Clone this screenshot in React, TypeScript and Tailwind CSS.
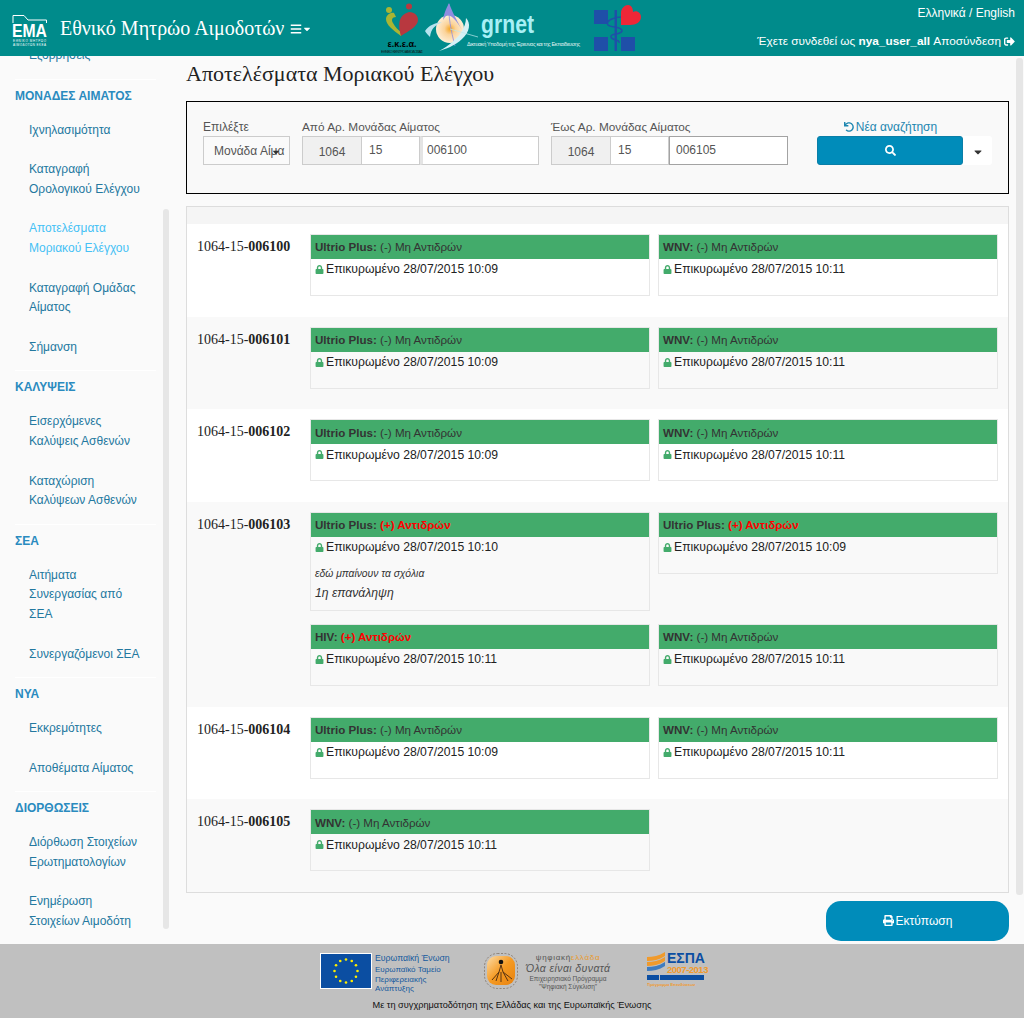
import { FaBars, FaCaretDown, FaLock, FaPrint, FaSearch, FaSignOutAlt, FaUndo } from 'react-icons/fa';

interface NavGroup {
  title?: string;
  items: string[];
}

interface CardData {
  name: string;
  positive?: boolean;
  date: string;
  comments?: boolean;
}

interface RowData {
  code: string;
  cards: CardData[];
}

const navGroups: NavGroup[] = [
  { items: ['Εξορρήσεις'] },
  {
    title: 'ΜΟΝΑΔΕΣ ΑΙΜΑΤΟΣ',
    items: ['Ιχνηλασιμότητα', 'Καταγραφή\nΟρολογικού Ελέγχου', 'Αποτελέσματα\nΜοριακού Ελέγχου', 'Καταγραφή Ομάδας\nΑίματος', 'Σήμανση'],
  },
  { title: 'ΚΑΛΥΨΕΙΣ', items: ['Εισερχόμενες\nΚαλύψεις Ασθενών', 'Καταχώριση\nΚαλύψεων Ασθενών'] },
  { title: 'ΣΕΑ', items: ['Αιτήματα\nΣυνεργασίας από\nΣΕΑ', 'Συνεργαζόμενοι ΣΕΑ'] },
  { title: 'ΝΥΑ', items: ['Εκκρεμότητες', 'Αποθέματα Αίματος'] },
  { title: 'ΔΙΟΡΘΩΣΕΙΣ', items: ['Διόρθωση Στοιχείων\nΕρωτηματολογίων', 'Ενημέρωση\nΣτοιχείων Αιμοδότη'] },
];

const rows: RowData[] = [
  { code: '006100', cards: [{ name: 'Ultrio Plus', date: '28/07/2015 10:09' }, { name: 'WNV', date: '28/07/2015 10:11' }] },
  { code: '006101', cards: [{ name: 'Ultrio Plus', date: '28/07/2015 10:09' }, { name: 'WNV', date: '28/07/2015 10:11' }] },
  { code: '006102', cards: [{ name: 'Ultrio Plus', date: '28/07/2015 10:09' }, { name: 'WNV', date: '28/07/2015 10:11' }] },
  {
    code: '006103',
    cards: [
      { name: 'Ultrio Plus', positive: true, date: '28/07/2015 10:10', comments: true },
      { name: 'Ultrio Plus', positive: true, date: '28/07/2015 10:09' },
      { name: 'HIV', positive: true, date: '28/07/2015 10:11' },
      { name: 'WNV', date: '28/07/2015 10:11' },
    ],
  },
  { code: '006104', cards: [{ name: 'Ultrio Plus', date: '28/07/2015 10:09' }, { name: 'WNV', date: '28/07/2015 10:11' }] },
  { code: '006105', cards: [{ name: 'WNV', date: '28/07/2015 10:11' }] },
];

function EmaLogo() {
  return (
    <svg width="36" height="36" viewBox="0 0 36 36" className="shrink-0">
      <path d="M1 9V1.5H12L16 6H34.5V9" fill="none" stroke="#fff" strokeWidth="1" />
      <text x="0" y="23" fill="#fff" fontSize="19" fontWeight="700" textLength="35" lengthAdjust="spacingAndGlyphs">EMA</text>
      <text x="1" y="28" fill="#fff" fontSize="3" textLength="33">ΕΘΝΙΚΟ ΜΗΤΡΩΟ</text>
      <text x="1" y="32" fill="#fff" fontSize="3" textLength="33">ΑΙΜΟΔΟΤΩΝ ΕΚΕΑ</text>
    </svg>
  );
}

function EkeaLogo() {
  return (
    <svg width="44" height="50" viewBox="0 0 44 50" className="shrink-0">
      <circle cx="8" cy="7" r="3" fill="#a9b533" />
      <circle cx="28" cy="3.5" r="3" fill="#b8383f" />
      <path d="M20 33C12 27 5 22 5 16C5 12 10 9 13 10L15 14C11 14 10 17 12 20C14 24 17 27 20 29Z" fill="#a9b533" />
      <path d="M20 33C17 22 17 12 28 9C34 9 37 13 37 17C37 23 28 28 20 33Z" fill="#b8383f" />
      <text x="21" y="44" textAnchor="middle" fill="#000" fontSize="9" fontWeight="700">ε.κ.ε.α.</text>
      <text x="21" y="49.5" textAnchor="middle" fill="#111" fontSize="3.6" textLength="42">ΕΘΝΙΚΟ ΚΕΝΤΡΟ ΑΙΜΟΔΟΣΙΑΣ</text>
    </svg>
  );
}

function GrnetLogo() {
  return (
    <svg width="158" height="50" viewBox="0 0 158 50" className="shrink-0">
      <defs>
        <radialGradient id="orb">
          <stop offset="0" stopColor="#f5a623" />
          <stop offset="0.4" stopColor="#fbd39a" />
          <stop offset="1" stopColor="#fdeed6" />
        </radialGradient>
      </defs>
      <circle cx="25" cy="26" r="14" fill="url(#orb)" />
      <path d="M18 17C19 10 21 6 24 0C27 8 30 14 37 27C31 17 26 11 21 13C20 14 19 15 18 17Z" fill="#8f8de0" />
      <path d="M24 1C23 12 26 28 30 43" fill="none" stroke="#8f8de0" strokeWidth="0.8" />
      <path d="M0 28C4 22 10 20 17 19C11 22 6 25 5 34C3 32 1 30 0 28Z" fill="#b6e3ee" />
      <path d="M41 15C46 20 45 29 37 36C30 43 20 46 14 48C24 43 33 35 37 28C39 24 41 20 41 15Z" fill="#d6f1f5" />
      <path d="M25 26L53 34" stroke="#bfe9ee" strokeWidth="0.7" />
      <text x="56" y="30" fill="#a8f0f5" fontSize="25" fontWeight="700" textLength="53" lengthAdjust="spacingAndGlyphs">grnet</text>
      <text x="42" y="43" fill="#e4f6f5" fontSize="5.4" textLength="113">Δικτυακή Υποδομή της Έρευνας και της Εκπαίδευσης</text>
    </svg>
  );
}

function MedicalLogo() {
  return (
    <svg width="48" height="48" viewBox="0 0 48 48" className="shrink-0">
      <path d="M0 6H14V20H0ZM27 33H41V47H27ZM0 33H14V47H0Z" fill="#1f4fa8" />
      <path d="M20.5 6H23V47H20.5Z" fill="#1f4fa8" />
      <path d="M27 13C20 13 11 17 14 21C17 24 28 22 28 27C27 31 16 29 17 33C18 37 26 35 25 39" fill="none" stroke="#1f4fa8" strokeWidth="1.5" />
      <path d="M27 21V9C27 4 31 1 34 1C38 1 39 5 39 8C43 6 47 9 47 13C47 18 42 21 36 21Z" fill="#ee2737" />
    </svg>
  );
}

function EuFlag() {
  const stars = Array.from({ length: 12 }, (_, i) => {
    const a = (i * Math.PI) / 6;
    return { x: 26 + Math.cos(a) * 11.5, y: 18 + Math.sin(a) * 11.5 };
  });
  return (
    <svg width="52" height="36" viewBox="0 0 52 36" className="shrink-0">
      <rect x="0.5" y="0.5" width="51" height="35" fill="#0b4ea2" stroke="#fff" />
      {stars.map((s, i) => (
        <circle key={i} cx={s.x} cy={s.y} r="1.3" fill="#ffed00" />
      ))}
    </svg>
  );
}

function DigitalLogo() {
  return (
    <svg width="34" height="36" viewBox="0 0 34 36" className="shrink-0">
      <defs>
        <linearGradient id="dg" x1="0" y1="0" x2="1" y2="1">
          <stop offset="0" stopColor="#fcdca8" />
          <stop offset="0.5" stopColor="#f59a22" />
          <stop offset="1" stopColor="#e8820f" />
        </linearGradient>
      </defs>
      <rect x="3" y="3" width="28" height="29" rx="9" fill="url(#dg)" />
      <rect x="0.5" y="0.5" width="33" height="35" rx="13" fill="none" stroke="#6b5b4b" strokeWidth="0.6" strokeDasharray="2 1.5" />
      <circle cx="17" cy="9" r="2.3" fill="#111" />
      <path d="M17 12L15 19L12 28M17 12L19 19L24 28M15 19L8 27M17 19L17 29M19 19L28 26" stroke="#5a3412" strokeWidth="1" fill="none" />
    </svg>
  );
}

function EspaLogo() {
  return (
    <div className="flex w-[57px] shrink-0 flex-col">
      <div className="flex">
        <svg width="19" height="21" viewBox="0 0 19 21" className="shrink-0">
          <path d="M0 5C6 5 12 4 18 0V4C12 8 6 9 0 9ZM0 10C6 10 12 9 18 5V9C12 13 6 14 0 14Z" fill="#f09a2c" />
          <path d="M0 15C6 15 12 14 18 10V14C12 18 6 19 0 19Z" fill="#3f7cc0" />
        </svg>
        <div className="ml-[1px] text-[#0b4ea2]">
          <div className="text-[14px] leading-[12px] font-bold whitespace-nowrap">ΕΣΠΑ</div>
          <div className="mt-[1px] text-[9.5px] leading-[10px] font-bold tracking-[-0.5px] whitespace-nowrap text-[#f09a2c]">2007-2013</div>
        </div>
      </div>
      <div className="flex gap-[1px]">
        <div className="h-[5px] w-[12px] bg-[#0b4ea2]" />
        <div className="h-[5px] flex-1 bg-[#0b4ea2]" />
      </div>
      <div className="mt-[2px] w-[57px] overflow-hidden text-[4px] leading-[6px] font-bold whitespace-nowrap text-[#f09a2c]">Πρόγραμμα Επενδύσεων</div>
    </div>
  );
}

function Sidebar() {
  return (
    <aside className="relative w-[186px] shrink-0 overflow-hidden">
      <div className="-mt-[20px] w-[156px] pl-[15px]">
        {navGroups.map((group, index) => (
          <div key={index} className={index > 0 ? 'border-t border-white pt-[9px]' : ''}>
            {group.title && <h4 className="h-[15px] text-[12px] leading-[15px] font-bold whitespace-nowrap text-[#2a8bbf]">{group.title}</h4>}
            <ul className={group.title ? 'mt-[7px] pb-[3px]' : 'pb-[3px]'}>
              {group.items.map((item) => (
                <li
                  key={item}
                  className={`py-[10px] pl-[14px] text-[12px] leading-[19.6px] whitespace-pre-line ${item.startsWith('Αποτελέσματα') ? 'text-[#45c1f5]' : 'text-[#23789f]'}`}
                >
                  {item}
                </li>
              ))}
            </ul>
          </div>
        ))}
      </div>
      <div className="absolute top-[153px] left-[163px] h-[720px] w-[6px] rounded-[3px] bg-[#e6e6e6]" />
    </aside>
  );
}

function UnitField({ label, last, focused }: { label: string; last: string; focused?: boolean }) {
  return (
    <div className="w-[237px]">
      <label className="block h-[26px] pt-[8px] text-[11.8px] leading-[18px] whitespace-nowrap text-[#555]">{label}</label>
      <div className="flex h-[29px] text-[12px] text-[#555]">
        <div className="flex w-[60px] items-center justify-center border border-[#ccc] bg-[#f0f0f0] pt-[2px]">1064</div>
        <input readOnly value="15" className="w-[58px] border-y border-r border-[#ccc] bg-white pb-[1px] pl-[7px] outline-none" />
        <input
          readOnly
          value={last}
          className={`min-w-0 flex-1 border bg-white pb-[1px] outline-none ${focused ? 'border-[#a3a3a3] pl-[6px]' : 'border-[#ccc] border-l-[3px] border-l-[#e4e4e4] pl-[4px]'}`}
        />
      </div>
    </div>
  );
}

function SearchBox() {
  return (
    <section className="flex h-[93px] gap-[12px] border border-black bg-[#f9f9f9] pt-[8px] pl-[16px]">
      <div className="w-[87px]">
        <label className="block h-[26px] pt-[8px] text-[12px] leading-[18px] text-[#555]">Επιλέξτε</label>
        <div className="relative flex h-[29px] items-center overflow-hidden border border-[#ccc] bg-[#fafafa] pl-[10px] text-[12px] whitespace-nowrap text-[#555]">
          Μονάδα Αίμα
          <FaCaretDown className="absolute top-[10px] right-[8px] text-[10px] text-[#333]" />
        </div>
      </div>
      <UnitField label="Από Αρ. Μονάδας Αίματος" last="006100" />
      <UnitField label="Έως Αρ. Μονάδας Αίματος" last="006105" focused />
      <div className="ml-[17px] w-[175px]">
        <a className="flex h-[26px] w-[146px] items-center justify-center gap-[2px] pt-[8px] pl-[1px] text-[12px] leading-[18px] text-[#1d86b0]">
          <FaUndo className="text-[10px]" />
          Νέα αναζήτηση
        </a>
        <div className="flex h-[29px]">
          <button className="flex w-[146px] items-center justify-center rounded-[3px] border border-[#0a7fa8] bg-[#008cba] text-white">
            <FaSearch className="text-[11px]" />
          </button>
          <button className="flex w-[29px] items-center justify-center rounded-r-[3px] bg-white text-[#333]">
            <FaCaretDown className="mt-[2px] text-[12px]" />
          </button>
        </div>
      </div>
    </section>
  );
}

function ResultCard({ card }: { card: CardData }) {
  return (
    <div className={`border border-[#e7e7e7] ${card.comments ? 'h-[99px]' : 'h-[62px]'}`}>
      <div className="flex h-[24px] items-center bg-[#43ab6b] pl-[4px] text-[11.6px] text-[#333]">
        <span className="font-bold whitespace-pre">{card.name}: </span>
        {card.positive ? <span className="font-bold text-[#f00]">(+) Αντιδρών</span> : <span>(-) Μη Αντιδρών</span>}
      </div>
      <div className="flex h-[21px] items-center gap-[2px] pl-[4px] text-[12.2px] text-[#222]">
        <FaLock className="text-[9px] text-[#43ab6b]" />
        <span>Επικυρωμένο {card.date}</span>
      </div>
      {card.comments && (
        <div className="pt-[9px] pl-[4px] italic text-[#333]">
          <p className="text-[10.3px] leading-[14px]">εδώ μπαίνουν τα σχόλια</p>
          <p className="mt-[4px] text-[12.2px] leading-[16px]">1η επανάληψη</p>
        </div>
      )}
    </div>
  );
}

function ResultRow({ row, odd }: { row: RowData; odd: boolean }) {
  return (
    <div className={`flex pt-[10px] pb-[20.67px] ${odd ? 'bg-[#f9f9f9]' : 'bg-white'}`}>
      <div className="w-[123px] shrink-0 pt-[4px] pl-[10px] font-['Liberation_Serif',serif] text-[14px] leading-[18px] text-[#222]">
        1064-15-<b>{row.code}</b>
      </div>
      <div className="grid w-[688px] grid-cols-[340px_340px] items-start gap-x-[8px] gap-y-[13px]">
        {row.cards.map((card, index) => (
          <ResultCard key={index} card={card} />
        ))}
      </div>
    </div>
  );
}

function Footer() {
  return (
    <footer className="h-[74px] shrink-0 bg-[#c0c0c0]">
      <div className="flex h-[54px] items-start justify-center pt-[9px]">
        <EuFlag />
        <div className="ml-[3px] w-[80px] text-[#14599e]">
          <p className="text-[8.7px] leading-[11px] whitespace-nowrap">Ευρωπαϊκή Ένωση</p>
          <p className="mt-[1px] text-[8px] leading-[9.5px] whitespace-pre-line">{'Ευρωπαϊκό Ταμείο\nΠεριφερειακής\nΑνάπτυξης'}</p>
        </div>
        <div className="ml-[29px] flex items-start gap-[4px]">
          <DigitalLogo />
          <div className="w-[92px] text-center text-[#555]">
            <p className="text-[8px] leading-[10px] tracking-[0.7px] whitespace-nowrap">ψηφιακή<span className="text-[#e89a2d]">ελλάδα</span></p>
            <p className="text-[10.5px] leading-[11px] tracking-[0.4px] whitespace-nowrap italic">Όλα είναι δυνατά</p>
            <p className="mt-[1px] text-[6.5px] leading-[8px] whitespace-nowrap">Επιχειρησιακό Πρόγραμμα</p>
            <p className="text-[6.5px] leading-[7px] whitespace-nowrap">"Ψηφιακή Σύγκλιση"</p>
          </div>
        </div>
        <div className="ml-[33px] -mt-[1px]">
          <EspaLogo />
        </div>
      </div>
      <p className="text-center text-[9.2px] leading-[14px] text-[#111]">Με τη συγχρηματοδότηση της Ελλάδας και της Ευρωπαϊκής Ένωσης</p>
    </footer>
  );
}

export default function App() {
  return (
    <div className="flex h-[1018px] flex-col overflow-hidden bg-[#fafafa] font-['Liberation_Sans',sans-serif]">
      <header className="flex h-[56px] shrink-0 bg-[#008b8b] text-white">
        <div className="flex items-start pt-[14px] pl-[12px]">
          <EmaLogo />
          <span className="ml-[12px] font-['Liberation_Serif',serif] text-[20px] leading-[28px] whitespace-nowrap">Εθνικό Μητρώο Αιμοδοτών</span>
          <FaBars className="mt-[9px] ml-[6px] text-[12px]" />
          <FaCaretDown className="mt-[10px] text-[10px]" />
        </div>
        <div className="ml-[69px] flex items-start pt-[3px]">
          <EkeaLogo />
          <GrnetLogo />
          <div className="ml-[11px] pt-[1px]">
            <MedicalLogo />
          </div>
        </div>
        <div className="ml-auto flex flex-col items-end pt-[5px] pr-[9px] text-[12px] leading-[16px]">
          <span>Ελληνικά / English</span>
          <span className="mt-[12px] flex items-center gap-[3px] text-[11.8px] whitespace-pre">
            <span>
              Έχετε συνδεθεί ως <b>nya_user_all</b> Αποσύνδεση
            </span>
            <FaSignOutAlt className="text-[11px]" />
          </span>
        </div>
      </header>

      <div className="relative flex min-h-0 flex-1">
        <Sidebar />
        <main className="min-w-0 flex-1 pr-[15px]">
          <h1 className="h-[45px] pt-[5px] font-['Liberation_Serif',serif] text-[22px] leading-[26px] whitespace-nowrap text-[#222]">
            Αποτελέσματα Μοριακού Ελέγχου
          </h1>
          <SearchBox />
          <section className="mt-[12px] border border-[#ddd]">
            <div className="h-[17px] bg-[#f5f5f5]" />
            {rows.map((row, index) => (
              <ResultRow key={row.code} row={row} odd={index % 2 === 1} />
            ))}
          </section>
          <div className="mt-[8px] flex justify-end">
            <button className="flex h-[40px] w-[183px] items-center justify-center gap-[2px] rounded-[15px] bg-[#008cba] text-[12px] text-white">
              <FaPrint className="text-[11px]" />
              Εκτύπωση
            </button>
          </div>
        </main>
        <div className="absolute top-[2px] right-[1px] h-[837px] w-[7px] rounded-[3px] bg-[#e6e6e6]" />
      </div>

      <Footer />
    </div>
  );
}
